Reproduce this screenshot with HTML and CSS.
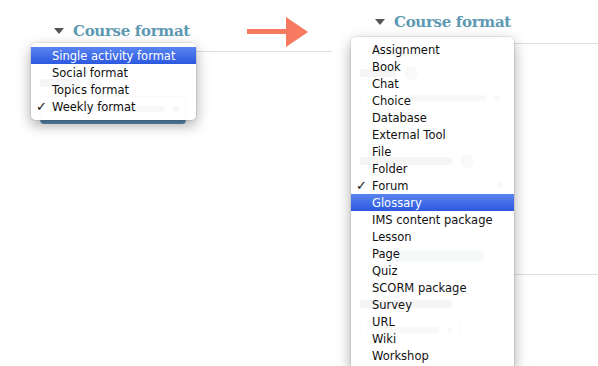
FILE: index.html
```html
<!DOCTYPE html>
<html lang="en">

<head>
    <meta charset="UTF-8">
    <title>Course format menus</title>
    <link rel="stylesheet" href="styles.css">
</head>

<body>
    <div class="page">
        <div class="panel panel-left">
            <div class="section-head">
                <span class="toggle"></span>
                <h3>Course format</h3>
            </div>
            <!-- form behind the menu, only a faint shape shows through -->
            <div class="form">
                <div class="label"><span class="smudge" style="width: 40px"></span><span class="help"></span></div>
                <div class="select select-focus"><span class="smudge" style="width: 80px"></span><span class="smudge" style="width: 6px"></span></div>
            </div>

            <div class="menu menu-left">
                <div class="item selected">Single activity format</div>
                <div class="item">Social format</div>
                <div class="item">Topics format</div>
                <div class="item checked">Weekly format</div>
            </div>

            <svg class="arrow" width="64" height="32" viewBox="0 0 64 32">
                <rect x="0" y="12" width="42" height="5" fill="#f57a5f"/>
                <polygon points="39,0 61,15 39,30" fill="#f57a5f"/>
            </svg>
        </div>

        <div class="panel panel-right">
            <div class="section-head">
                <span class="toggle"></span>
                <h3>Course format</h3>
            </div>
            <div class="form">
                <div class="label label-first"><span class="smudge" style="width: 36px"></span><span class="help"></span></div>
                <div class="select select-wide"><span class="smudge" style="width: 80px"></span><span class="smudge" style="width: 6px"></span></div>
                <div class="label label-gap"><span class="smudge" style="width: 92px"></span><span class="help"></span></div>
                <div class="select select-full"><span class="smudge" style="width: 6px"></span></div>
            </div>
            <div class="section-head section-appearance">
                <span class="toggle"></span>
                <span class="smudge smudge-head"></span>
            </div>
            <div class="form">
                <div class="label label-first"><span class="smudge" style="width: 92px"></span></div>
                <div class="select select-small"><span class="smudge" style="width: 50px"></span><span class="smudge" style="width: 6px"></span></div>
            </div>

            <div class="menu menu-right">
                <div class="item">Assignment</div>
                <div class="item">Book</div>
                <div class="item">Chat</div>
                <div class="item">Choice</div>
                <div class="item">Database</div>
                <div class="item">External Tool</div>
                <div class="item">File</div>
                <div class="item">Folder</div>
                <div class="item checked">Forum</div>
                <div class="item selected">Glossary</div>
                <div class="item">IMS content package</div>
                <div class="item">Lesson</div>
                <div class="item">Page</div>
                <div class="item">Quiz</div>
                <div class="item">SCORM package</div>
                <div class="item">Survey</div>
                <div class="item">URL</div>
                <div class="item">Wiki</div>
                <div class="item">Workshop</div>
            </div>
        </div>
    </div>
</body>

</html>
```

FILE: styles.css
```css
body {
    margin: 0;
    background-color: #fff;
    font-family: 'DejaVu Sans', sans-serif;
}

.page {
    display: flex;
    align-items: flex-start;
    width: 598px;
    height: 366px;
    overflow: hidden;
}

.panel {
    position: relative;
}

.panel-left {
    width: 292px;
    margin-left: 40px;
    padding-top: 21px;
}

.panel-right {
    flex: 1;
    margin-left: 20px;
    padding-top: 12px;
}

.section-head {
    display: flex;
    align-items: center;
    gap: 9px;
    border-bottom: 1px solid #dedede;
}

.panel-left .section-head {
    padding-left: 14px;
    padding-bottom: 10px;
}

.panel-right .section-head {
    padding-left: 23px;
    padding-bottom: 11px;
}

.toggle {
    width: 0;
    height: 0;
    border-left: 5px solid transparent;
    border-right: 5px solid transparent;
    border-top: 6px solid #555;
}

h3 {
    margin: 0;
    font-family: 'DejaVu Serif', serif;
    font-weight: bold;
    font-size: 15px;
    letter-spacing: -0.3px;
    line-height: 20px;
    color: #5d99b2;
}

/* form fields behind the open menus */
.form {
    padding-left: 8px;
}

.panel-left .form {
    padding-left: 0;
    padding-top: 24px;
}

.label {
    height: 14px;
    display: flex;
    align-items: center;
    gap: 8px;
}

.label-first {
    margin-top: 22px;
}

.label-gap {
    margin-top: 44px;
}

.smudge {
    display: inline-block;
    height: 8px;
    border-radius: 3px;
    background-color: #444;
}

.smudge-head {
    width: 90px;
    height: 12px;
    margin: 4px 0;
    background-color: #5d99b2;
}

.help {
    width: 14px;
    height: 14px;
    border-radius: 50%;
    background-color: #888;
}

.select {
    margin-top: 6px;
    height: 22px;
    border: 1px solid #bbb;
    border-radius: 4px;
    display: flex;
    align-items: center;
    justify-content: flex-end;
    gap: 8px;
    padding-right: 6px;
    box-sizing: border-box;
}

.select .smudge {
    height: 6px;
    background-color: #777;
}

.select-focus {
    width: 146px;
    height: 28px;
    border-color: #7ba3c4;
    border-bottom: 4px solid #5d8db5;
}

.select-wide {
    width: 147px;
    height: 24px;
}

.select-full {
    width: 150px;
}

.select-small {
    width: 100px;
    height: 25px;
}

.section-appearance {
    margin-top: 50px;
    padding-bottom: 8px !important;
}

/* open popup menus */
.menu {
    position: absolute;
    padding: 4px 0 5px;
    background-color: rgba(255, 255, 255, 0.95);
    border-radius: 5px;
    box-shadow: 0 0 0 1px rgba(0, 0, 0, 0.07), 0 5px 14px rgba(0, 0, 0, 0.35);
}

.menu-left {
    left: -9px;
    top: 43px;
    width: 165px;
}

.menu-right {
    left: -1px;
    top: 37px;
    width: 163px;
}

.item {
    position: relative;
    height: 17px;
    box-sizing: border-box;
    padding: 2px 0 0 21px;
    font-size: 11.5px;
    line-height: 15px;
    color: #111;
    white-space: nowrap;
}

.item.selected {
    background: linear-gradient(#5985f0, #2c58e0);
    color: #fff;
}

.item.checked::before {
    content: '\2713';
    position: absolute;
    left: 5px;
    top: 1px;
    font-size: 13px;
    font-weight: bold;
}

.arrow {
    position: absolute;
    left: 207px;
    top: 17px;
}
```
